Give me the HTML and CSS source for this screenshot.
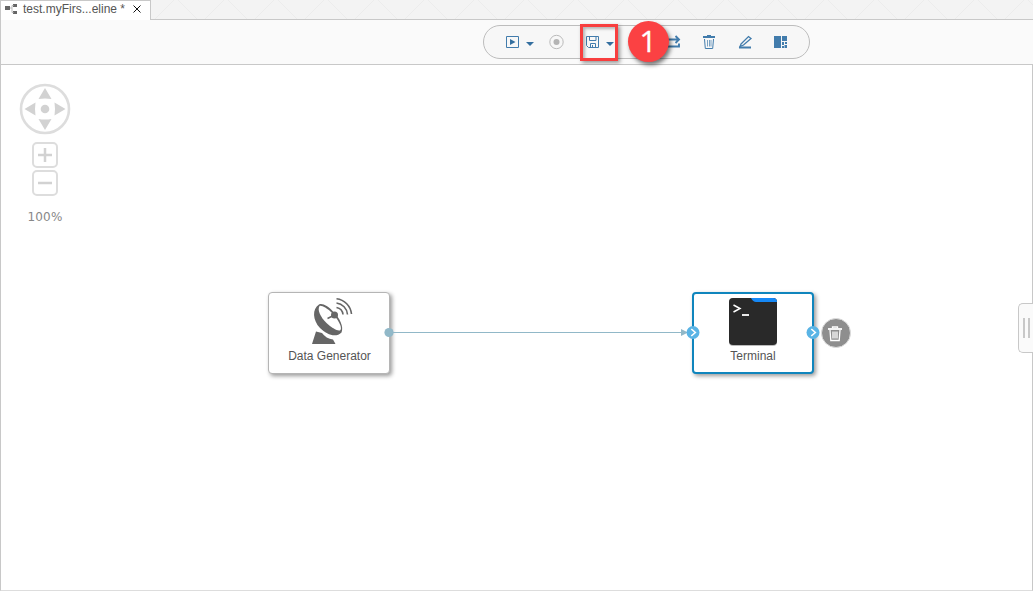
FILE: index.html
```html
<!DOCTYPE html>
<html lang="en">
<head>
<meta charset="utf-8">
<title>Pipeline modeler</title>
<link rel="stylesheet" href="styles.css">
</head>
<body>
<div class="app">
  <header class="tabs">
    <div class="tab">
      <svg class="tab-icon" width="14" height="12" viewBox="0 0 14 12"><path d="M1 3h5v4H1zM9 1h4v3H9zM9 8h4v3H9z" fill="#666"/><path d="M6 5h2M9.500 2.500H8v7h1.500" fill="none" stroke="#bbb"/></svg>
      <span class="tab-title">test.myFirs...eline *</span>
      <svg class="close" width="8" height="8" viewBox="0 0 8 8"><path d="M.5.5l7 7M7.5.5l-7 7" stroke="#111" fill="none"/></svg>
    </div>
    <svg class="tabs-pattern" width="882" height="19"><defs><pattern id="weave" width="50" height="50" patternUnits="userSpaceOnUse"><path d="M0 23L25-2l25 25" stroke="#ececec" fill="none"/></pattern></defs><rect width="882" height="19" fill="url(#weave)"/></svg>
  </header>
  <div class="toolbar">
    <div class="pill">
      <svg width="325" height="32" viewBox="484 26 325 32" fill="none" stroke="#427cac">
        <path d="M506.500 36.500h12v11h-12z"/><path d="M510 39v6l5.500-3z" fill="#346f9f" stroke="none"/>
        <path d="M526 42h8l-4 4z" fill="#346f9f" stroke="none"/>
        <circle cx="556.500" cy="42" r="6.700" stroke="#bbb"/><circle cx="556.500" cy="42" r="3" fill="#b4b4b4" stroke="none"/>
        <path d="M586.500 36.500h12v11h-10l-2-2zM589.500 36.500v4h6.500v-4M590.500 47.500v-4h5v4M592.500 45v2"/>
        <path d="M606 42h8l-4 4z" fill="#346f9f" stroke="none"/>
        <path d="M668 39.500h11M675.500 36l3.500 3.500-3.500 3.500M667 46.500h12v-3" stroke-width="1.900"/>
        <path d="M703 37h12" stroke-width="2"/><path d="M707 35.500h4M704.500 39l.8 9.500h7.400l.8-9.500"/><path d="M707.500 40v6.500M709.500 40v6.500M711 40v6.500" stroke-width=".7"/>
        <path d="M741 44l7.500-7.500 2.500 2-7.500 6.500-3.500 1.500z" stroke-width="1.300"/><path d="M739 47.500h12" stroke-width="1.800"/>
        <path d="M774 36h7v12h-7zM782 36h5v5h-5zM782 42h2v3h-2zM785 42h2v2h-2zM782 46h2v2h-2zM784.500 45h2.500v3h-2.500z" fill="#427cac" stroke="none"/>
      </svg>
    </div>
    <div class="highlight"></div>
    <div class="step"><span>1</span></div>
  </div>
  <main class="canvas">
    <div class="nav">
      <svg width="52" height="52" viewBox="0 0 52 52"><circle cx="26" cy="26" r="24" fill="none" stroke="#ddd" stroke-width="2.600"/><circle cx="26" cy="26" r="4.300" fill="#d2d2d2"/><path d="M26 5l6.500 11q-6.500-1-13 0zM26 47l6.500-11q-6.500 1-13 0zM5.500 26l11-6.500q-1 6.500 0 13zM46.500 26l-11-6.500q1 6.500 0 13z" fill="#d2d2d2"/></svg>
      <button class="zoom"><svg width="22" height="22"><path d="M4 11h14M11 4v14" stroke="#d2d2d2" stroke-width="2.500"/></svg></button>
      <button class="zoom"><svg width="22" height="22"><path d="M4 11h14" stroke="#d2d2d2" stroke-width="2.500"/></svg></button>
      <div class="percent">100%</div>
    </div>
    <div class="node generator">
      <svg width="44" height="48" viewBox="308 297 44 48"><path d="M311 344l4-12.500 6 1.500q4 5.500 11 6.500l2.500 4.500z" fill="#666"/><path d="M318 304.500C311 309 311.500 320 319 328c7 7 16 10 21.500 4.500C343 327 339 318 332 311.500 327 306 321.500 303 318 304.500z" fill="#666"/><path d="M318.500 306c-2.500 4 1 11 7 17 5.500 5 12 9 14 7 2-3-3-11.500-8.500-17-4.500-4.500-10.500-8-12.500-7z" fill="#fff"/><path d="M326.500 318.500l7-3.500" stroke="#666" stroke-width="1.400"/><circle cx="333.500" cy="315" r="3.500" fill="#666"/><path d="M335.500 307.500a8 8 0 0 1 6.500 7M335.500 303a12.500 12.500 0 0 1 11 11.500M335.500 298.700a17 17 0 0 1 15 15.300" stroke="#666" stroke-width="1.600" fill="none"/></svg>
      <div class="label">Data Generator</div>
    </div>
    <div class="node terminal">
      <svg width="48" height="48"><rect width="48" height="48" rx="4" fill="#bbb"/><rect width="48" height="47" rx="4" fill="#292929"/><path d="M22 0h22q4 0 4 4H27q-3 0-5-4z" fill="#1688f5"/><path d="M4.500 7l6.500 3.500L4.500 14" fill="none" stroke="#fff" stroke-width="1.500"/><path d="M13 17h7" stroke="#fff" stroke-width="1.800"/></svg>
      <div class="label">Terminal</div>
    </div>
    <svg class="wires" width="1033" height="526" viewBox="0 65 1033 526"><path d="M389 332.500h295" stroke="#91b8c8"/><path d="M681 329v7l7-3.500z" fill="#91b8c8"/><circle cx="389" cy="332.500" r="4.600" fill="#91b8c8"/><g fill="#5ab4e5"><circle cx="693" cy="332.500" r="6.500"/><circle cx="813" cy="332.500" r="6.500"/></g><path d="M691.300 329l4 3.500-4 3.500M811.300 329l4 3.500-4 3.500" fill="none" stroke="#fff" stroke-width="1.600"/></svg>
    <button class="delete"><svg width="14" height="16" viewBox="0 0 14 16" fill="none" stroke="#fff"><path d="M0 3h14" stroke-width="1.800"/><path d="M4.500 2V1h5v1M2 4l.8 10.500h8.400L12 4M5 5.500v7M7 5.500v7M9 5.500v7" stroke-width="1.300"/></svg></button>
    <div class="drawer"><i></i><i></i></div>
  </main>
</div>
</body>
</html>
```
FILE: styles.css
```css
* { box-sizing: border-box; }
body { margin: 0; font-family: "Liberation Sans", Arial, sans-serif; font-size: 12px; color: #555; }
svg { display: block; flex: none; }
button { padding: 0; font: inherit; }
.app { width: 1033px; height: 591px; display: flex; flex-direction: column; overflow: hidden; }
.tabs { height: 20px; display: flex; background: #f3f3f3; border-bottom: 1px solid #c8c8c8; }
.tab { width: 151px; height: 20px; display: flex; align-items: flex-start; padding: 2px 0 0 3px; background: #fff; border: 1px solid #c8c8c8; border-bottom: 0; }
.tab-title { width: 110px; margin-left: 5px; line-height: 13px; white-space: pre; }
.close { margin-top: 2px; }
.toolbar { position: relative; height: 45px; display: flex; padding: 5px 0 0 482px; background: #fafafa; border-bottom: 1px solid #c8c8c8; border-left: 1px solid #c8c8c8; }
.pill { width: 327px; height: 34px; border: 1px solid #bdbdbd; border-radius: 17px; background: #f7f7f7; overflow: hidden; }
.highlight { position: absolute; left: 579px; top: 4px; width: 38px; height: 37px; border: 3px solid #f83e3e; box-shadow: 2px 2px 4px #0006, inset 2px 2px 3px #0004; }
.step { position: absolute; z-index: 1; left: 627px; top: 1px; width: 41px; height: 41px; display: flex; align-items: center; justify-content: center; border-radius: 50%; background: #fb4143; box-shadow: 2px 3px 4px #0008; color: #fff; font: 30px/41px "Open Sans", sans-serif; -webkit-text-stroke: .3px #fff; }
.step span { margin: -3px 1px 0 0; }
.canvas { position: relative; flex: 1; background: #fff; border: solid #c8c8c8; border-width: 0 1px 1px; border-bottom-color: #ddd; }
.nav { width: 88px; padding-top: 18px; display: flex; flex-direction: column; align-items: center; }
.zoom { width: 26px; height: 26px; margin-top: 7px; border: 2px solid #ddd; border-radius: 5px; background: #fff; }
.zoom + .zoom { margin-top: 2px; }
.percent { margin-top: 12px; font: 12px/18px "DejaVu Sans", sans-serif; color: #888; letter-spacing: .2px; }
.node { position: absolute; top: 227px; width: 122px; height: 82px; display: flex; flex-direction: column; align-items: center; background: #fff; border: 1px solid #aaa; border-radius: 4px; box-shadow: 2px 2px 4px #0006; }
.generator { left: 267px; padding: 4px 0 0 1px; border-color: #b5b5b5; }
.generator svg { margin-left: 3px; }
.generator .label { margin-top: 4px; }
.terminal { left: 691px; padding-top: 4px; border: 2px solid #0f85bd; }
.label { margin-top: 3px; line-height: 15px; }
.wires { position: absolute; left: -1px; top: 0; pointer-events: none; }
.delete { position: absolute; left: 820px; top: 253px; width: 30px; height: 30px; display: flex; align-items: center; justify-content: center; padding: 1px 2px 0 0; border: 1px solid #ddd; border-radius: 50%; background: #8e8e8e; }
.drawer { position: absolute; right: -1px; top: 238px; width: 15px; height: 50px; display: flex; align-items: center; justify-content: center; gap: 3px; border: 1px solid #c8c8c8; border-right: 0; border-radius: 5px 0 0 5px; background: #fafafa; }
.drawer i { width: 2px; height: 20px; background: #c8c8c8; }
```
